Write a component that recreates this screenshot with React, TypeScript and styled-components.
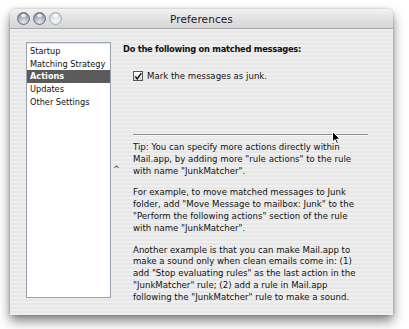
import React from "react";
import styled, { createGlobalStyle } from "styled-components";

const Global = createGlobalStyle`
  html, body { margin: 0; padding: 0; background: #ffffff; }
  body { font-family: "DejaVu Sans", "Liberation Sans", sans-serif; }
`;

const Page = styled.div`
  width: 409px;
  height: 329px;
  padding: 9px 0 0 10px;
  box-sizing: border-box;
  overflow: hidden;
`;

const Window = styled.div`
  width: 383px;
  height: 306px;
  border-radius: 6px 6px 0 0;
  box-shadow: 0 6px 12px rgba(0, 0, 0, 0.5), 0 0 3px rgba(0, 0, 0, 0.25);
  display: flex;
  flex-direction: column;
  overflow: hidden;
  background: repeating-linear-gradient(
    to bottom,
    #efefef 0px,
    #efefef 2px,
    #e7e7e7 2px,
    #e7e7e7 4px
  );
`;

const TitleBar = styled.div`
  position: relative;
  height: 19px;
  flex: none;
  display: flex;
  align-items: center;
  justify-content: center;
  background: linear-gradient(to bottom, #f2f2f2 0%, #e2e2e2 50%, #d6d6d6 100%);
  border-bottom: 1px solid #a8a8a8;
`;

const Lights = styled.div`
  position: absolute;
  left: 7px;
  top: 3px;
  display: flex;
  gap: 3px;
`;

const Light = styled.span<{ $dim?: boolean }>`
  width: 13px;
  height: 13px;
  border-radius: 50%;
  box-sizing: border-box;
  border: 1px solid ${(p) => (p.$dim ? "#a3abb5" : "#66717f")};
  background: ${(p) =>
    p.$dim
      ? "radial-gradient(circle at 50% 75%, #f4f6f8 0%, #dde2e7 55%, #c4cad1 100%)"
      : "radial-gradient(circle at 50% 80%, #e2e8ee 0%, #a3aebb 55%, #75818f 100%)"};
  position: relative;
  &::after {
    content: "";
    position: absolute;
    left: 3px;
    top: 1px;
    width: 5px;
    height: 3px;
    border-radius: 50%;
    background: rgba(255, 255, 255, 0.85);
  }
`;

const Title = styled.div`
  font-size: 10.5px;
  color: #1a1a1a;
  letter-spacing: 0.1px;
`;

const Body = styled.div`
  position: relative;
  flex: 1;
  display: flex;
  padding: 13px 0 0 16px;
  gap: 12px;
`;

const List = styled.ul`
  list-style: none;
  margin: 0;
  padding: 2px 0 0 0;
  width: 85px;
  height: 256px;
  box-sizing: border-box;
  background: #ffffff;
  border: 1px solid #98a2b2;
  box-shadow: inset 0 1px 1px rgba(0, 0, 0, 0.12);
  flex: none;
`;

const Item = styled.li<{ $selected?: boolean }>`
  height: 12.7px;
  line-height: 12.7px;
  padding-left: 3px;
  font-size: 8.2px;
  white-space: nowrap;
  color: ${(p) => (p.$selected ? "#ffffff" : "#111111")};
  background: ${(p) => (p.$selected ? "#5b5b5b" : "transparent")};
  font-weight: ${(p) => (p.$selected ? "bold" : "normal")};
`;

const Main = styled.div`
  display: flex;
  flex-direction: column;
  padding-top: 1px;
`;

const Heading = styled.div`
  font-size: 8.3px;
  letter-spacing: -0.25px;
  font-weight: bold;
  color: #111;
  line-height: 12px;
  white-space: nowrap;
`;

const CheckRow = styled.label`
  display: flex;
  align-items: center;
  gap: 4px;
  margin: 15px 0 0 10px;
  font-size: 8.6px;
  color: #111;
  line-height: 12px;
`;

const Box = styled.span`
  width: 10px;
  height: 10px;
  box-sizing: border-box;
  border: 1px solid #555;
  background: linear-gradient(to bottom, #ffffff, #d8d8d8);
  display: flex;
  align-items: center;
  justify-content: center;
`;

const Separator = styled.div`
  margin: 52px 0 0 10px;
  width: 235px;
  height: 1px;
  background: #8d8d8d;
  border-bottom: 1px solid #fafafa;
`;

const Notes = styled.div`
  margin: 6px 0 0 10px;
  display: flex;
  flex-direction: column;
  gap: 10px;
`;

const Para = styled.p`
  margin: 0;
  font-size: 8.6px;
  line-height: 11.8px;
  color: #111;
  white-space: nowrap;
`;

const Caret = styled.span`
  position: absolute;
  left: 103px;
  top: 136px;
  font-size: 8px;
  color: #333;
`;

const Cursor = styled.svg`
  position: absolute;
  left: 322px;
  top: 102px;
`;

export default function App() {
  return (
    <>
      <Global />
      <Page>
        <Window>
          <TitleBar>
            <Lights>
              <Light />
              <Light />
              <Light $dim />
            </Lights>
            <Title>Preferences</Title>
          </TitleBar>
          <Body>
            <List>
              <Item>Startup</Item>
              <Item>Matching Strategy</Item>
              <Item $selected>Actions</Item>
              <Item>Updates</Item>
              <Item>Other Settings</Item>
            </List>
            <Main>
              <Heading>Do the following on matched messages:</Heading>
              <CheckRow>
                <Box>
                  <svg width="9" height="9" viewBox="0 0 9 9">
                    <path d="M1.5 4.5 L3.6 7.2 L8.2 0.6" fill="none" stroke="#111" strokeWidth="1.6" />
                  </svg>
                </Box>
                Mark the messages as junk.
              </CheckRow>
              <Separator />
              <Notes>
                <Para>
                  Tip: You can specify more actions directly within
                  <br />
                  Mail.app, by adding more "rule actions" to the rule
                  <br />
                  with name "JunkMatcher".
                </Para>
                <Para>
                  For example, to move matched messages to Junk
                  <br />
                  folder, add "Move Message to mailbox: Junk" to the
                  <br />
                  "Perform the following actions" section of the rule
                  <br />
                  with name "JunkMatcher".
                </Para>
                <Para>
                  Another example is that you can make Mail.app to
                  <br />
                  make a sound only when clean emails come in: (1)
                  <br />
                  add "Stop evaluating rules" as the last action in the
                  <br />
                  "JunkMatcher" rule; (2) add a rule in Mail.app
                  <br />
                  following the "JunkMatcher" rule to make a sound.
                </Para>
              </Notes>
            </Main>
            <Caret>^</Caret>
            <Cursor width="9" height="14" viewBox="0 0 9 14">
              <path d="M0.5 0.5 L0.5 11 L3 8.6 L4.8 12.8 L6.4 12.1 L4.7 8.1 L8 8.1 Z" fill="#000" stroke="#fff" strokeWidth="1" />
            </Cursor>
          </Body>
        </Window>
      </Page>
    </>
  );
}
